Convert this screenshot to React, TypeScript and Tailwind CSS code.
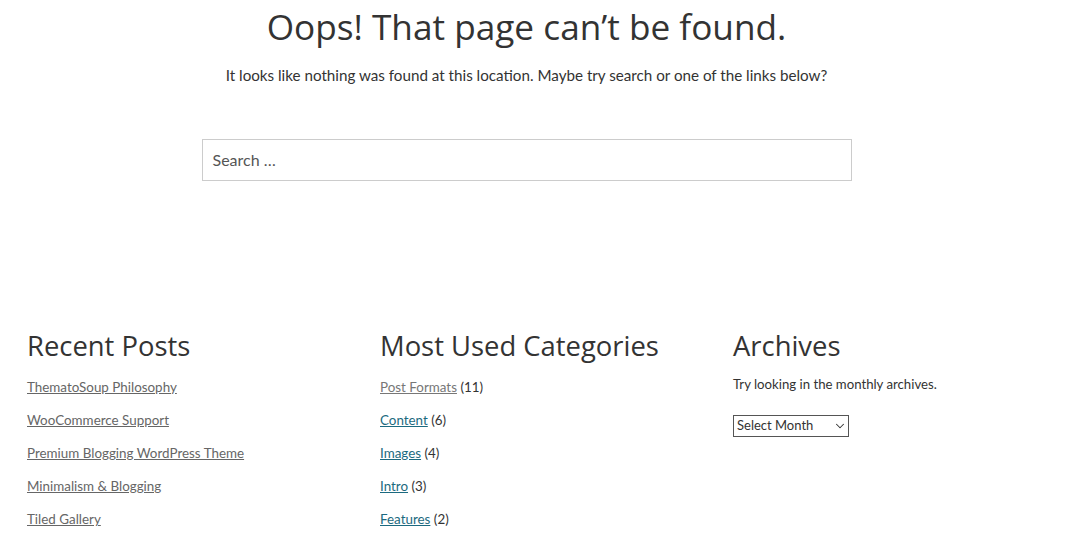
import { ChevronDown } from "lucide-react";

const recent = [
  "ThematoSoup Philosophy",
  "WooCommerce Support",
  "Premium Blogging WordPress Theme",
  "Minimalism & Blogging",
  "Tiled Gallery",
];

const categories = [
  { name: "Post Formats", count: 11, muted: true },
  { name: "Content", count: 6 },
  { name: "Images", count: 4 },
  { name: "Intro", count: 3 },
  { name: "Features", count: 2 },
];

const heading = "font-['Open_Sans',sans-serif] text-[#333]";
const body = "font-['Lato','Liberation_Sans',sans-serif]";

const App = () => {
  return (
    <div className={`min-h-[544px] bg-white ${body} text-[#333]`}>
      <section className="flex flex-col items-center pt-[4px] pr-[19px]">
        <h1 className={`${heading} text-[35.2px] leading-[44px]`}>
          Oops! That page can’t be found.
        </h1>
        <p className="mt-[16px] text-[15.2px] leading-[22px]">
          It looks like nothing was found at this location. Maybe try search or one of the links below?
        </p>
        <div className="mt-[53px] flex h-[42px] w-[650px] items-center border border-[#ccc] px-[10px]">
          <span className="text-[16px] text-[#555]">Search …</span>
        </div>
      </section>

      <section className="mt-[147px] grid grid-cols-[353px_353px_1fr] pl-[27px]">
        <div>
          <h2 className={`${heading} text-[27.4px] leading-[36px]`}>Recent Posts</h2>
          <ul className="mt-[13px] flex flex-col gap-[13px] text-[13.4px] leading-[20px]">
            {recent.map((r) => (
              <li key={r}>
                <a className="text-[#666] underline">{r}</a>
              </li>
            ))}
          </ul>
        </div>
        <div>
          <h2 className={`${heading} text-[27.4px] leading-[36px]`}>Most Used Categories</h2>
          <ul className="mt-[13px] flex flex-col gap-[13px] text-[13.4px] leading-[20px]">
            {categories.map((c) => (
              <li key={c.name}>
                <a className={`underline ${c.muted ? "text-[#777]" : "text-[#1c6a80]"}`}>{c.name}</a>{" "}
                ({c.count})
              </li>
            ))}
          </ul>
        </div>
        <div>
          <h2 className={`${heading} text-[27.4px] leading-[36px]`}>Archives</h2>
          <p className="mt-[10px] text-[13.2px] leading-[20px]">Try looking in the monthly archives.</p>
          <div className="mt-[21px] flex h-[22px] w-[116px] items-center justify-between border border-[#555] pl-[3px] pr-[1px] text-[13px]">
            <span>Select Month</span>
            <ChevronDown className="h-[14px] w-[14px]" strokeWidth={1.75} />
          </div>
        </div>
      </section>
    </div>
  );
};

export default App;
